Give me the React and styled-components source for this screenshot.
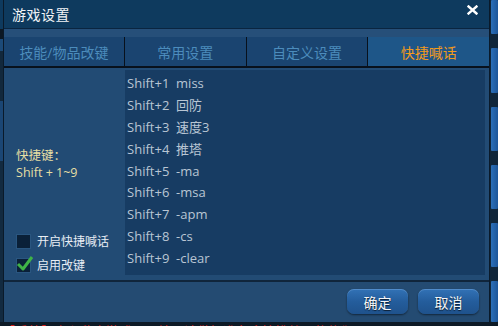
import React from "react";
import styled, { createGlobalStyle } from "styled-components";

const FONT = `"Open Sans", "Noto Sans CJK SC", sans-serif`;

const GlobalStyle = createGlobalStyle`
  html, body {
    margin: 0;
    padding: 0;
    background: #0d1d2c;
    overflow: hidden;
  }
  body {
    font-family: ${FONT};
  }
`;

//페이지
const Page = styled.div`
  width: 498px;
  height: 326px;
  display: flex;
  flex-direction: column;
  overflow: hidden;
`;

const Stage = styled.div`
  display: flex;
  height: 322px;
`;

const LeftEdge = styled.div`
  width: 4px;
  display: flex;
  flex-direction: column;
  background: #122a40;
`;

const EdgePiece = styled.div`
  height: ${props => props.h}px;
  background: ${props => props.color};
`;

const SideBars = styled.div`
  width: 9px;
  display: flex;
  flex-direction: column;
  gap: 14px;
  padding-left: 1px;
  background: #10263a;
`;

const SideBar = styled.div`
  height: ${props => props.h}px;
  background: linear-gradient(90deg, #2b6fb8, #1d5699);
  border-radius: 1px;
`;

const ChatLine = styled.div`
  height: 4px;
  overflow: hidden;
  background: #0d1a26;
  padding-left: 2px;
  color: #e0201a;
  font-size: 13px;
  line-height: 18px;
  white-space: nowrap;
`;

//다이얼로그
const Dialog = styled.div`
  width: 485px;
  display: flex;
  flex-direction: column;
  border-left: 1px solid #0a1a2a;
  border-right: 1px solid #0a1a2a;
  background: #224b74;
`;

const TitleBar = styled.div`
  height: 28px;
  display: flex;
  align-items: center;
  justify-content: space-between;
  padding: 0 10px 0 8px;
  background: #0e3a5e;
  border-bottom: 1px solid #0a2540;
`;

const Title = styled.div`
  color: #f2f4f6;
  font-size: 14px;
  letter-spacing: 0.5px;
`;

const CloseButton = styled.div`
  width: 14px;
  height: 14px;
  display: flex;
  align-items: center;
  justify-content: center;
  margin-top: -8px;
`;

const Strip = styled.div`
  height: 8px;
  background: #264f79;
`;

//탭
const Tabs = styled.div`
  height: 29px;
  display: flex;
  border-bottom: 2px solid #08111c;
`;

const Tab = styled.div`
  width: ${props => props.w}px;
  display: flex;
  align-items: center;
  justify-content: center;
  font-size: 14px;
  color: ${props => (props.active ? "#f39a1c" : "#4c8cbc")};
  background: ${props => (props.active ? "#1e5688" : "#1a4470")};
  border-left: ${props => (props.first ? "none" : "1px solid #08111c")};
`;

//본문
const Body = styled.div`
  height: 205px;
  display: flex;
  padding: 2px 4px 5px 0;
  border-bottom: 2px solid #10253b;
`;

const Side = styled.div`
  width: 121px;
  display: flex;
  flex-direction: column;
  padding-left: 12px;
  box-sizing: border-box;
`;

const HotkeyInfo = styled.div`
  margin-top: 77px;
  display: flex;
  flex-direction: column;
  color: #e6dfa4;
  font-size: 12.5px;
`;

const InfoLine = styled.div`
  height: 17px;
  line-height: 17px;
  white-space: nowrap;
`;

const Options = styled.div`
  margin-top: auto;
  display: flex;
  flex-direction: column;
  gap: 8px;
  padding-bottom: 2px;
`;

const Option = styled.label`
  display: flex;
  align-items: center;
  gap: 6px;
  color: #e8eef4;
  font-size: 12px;
  height: 16px;
`;

const Box = styled.span`
  width: 13px;
  height: 13px;
  position: relative;
  background: #0a2038;
  border: 1px solid #2a5680;
  flex-shrink: 0;
`;

const Check = styled.svg`
  position: absolute;
  left: -1px;
  top: -4px;
`;

const List = styled.div`
  flex: 1;
  background: #173c63;
  padding: 2px 0 0 2px;
`;

const Row = styled.div`
  display: flex;
  height: 21.9px;
  align-items: center;
  color: #b9c6d4;
  font-size: 13px;
`;

const Key = styled.span`
  width: 49px;
`;

//푸터
const Footer = styled.div`
  flex: 1;
  display: flex;
  justify-content: flex-end;
  align-items: flex-start;
  gap: 10px;
  padding: 7px 10px 0 0;
  background: #244b72;
`;

const Button = styled.div`
  width: 61px;
  height: 25px;
  display: flex;
  align-items: center;
  justify-content: center;
  border-radius: 7px;
  background: linear-gradient(180deg, #3272b6 0%, #245d9c 50%, #1f528c 100%);
  box-shadow: 0 1px 2px rgba(0, 0, 0, 0.5), inset 0 1px 0 rgba(140, 190, 240, 0.35);
  color: #f4f6f8;
  font-size: 14px;
  text-shadow: 0 1px 1px #0a1a2c;
`;

const hotkeys = [
  ["Shift+1", "miss"],
  ["Shift+2", "回防"],
  ["Shift+3", "速度3"],
  ["Shift+4", "推塔"],
  ["Shift+5", "-ma"],
  ["Shift+6", "-msa"],
  ["Shift+7", "-apm"],
  ["Shift+8", "-cs"],
  ["Shift+9", "-clear"]
];

const tabs = [
  { label: "技能/物品改键", w: 120 },
  { label: "常用设置", w: 121 },
  { label: "自定义设置", w: 121 },
  { label: "快捷喊话", w: 121, active: true }
];

const App = () => (
  <Page>
    <GlobalStyle />
    <Stage>
      {/* 왼쪽 가장자리 */}
      <LeftEdge>
        <EdgePiece h={29} color="#0e3a5e" />
        <EdgePiece h={10} color="#0c1824" />
        <EdgePiece h={12} color="#1c4a78" />
        <EdgePiece h={50} color="#12283c" />
        <EdgePiece h={60} color="#1b4674" />
      </LeftEdge>
      <Dialog>
        <TitleBar>
          <Title>游戏设置</Title>
          <CloseButton>
            <svg width="11" height="10" viewBox="0 0 11 10">
              <path d="M1.5 1.5 L9.5 8.5 M9.5 1.5 L1.5 8.5" stroke="#fff" strokeWidth="2.4" strokeLinecap="square" />
            </svg>
          </CloseButton>
        </TitleBar>
        <Strip />
        <Tabs>
          {tabs.map((t, i) => (
            <Tab key={t.label} w={t.w} active={t.active} first={i === 0}>
              {t.label}
            </Tab>
          ))}
        </Tabs>
        <Body>
          <Side>
            <HotkeyInfo>
              <InfoLine>快捷键：</InfoLine>
              <InfoLine>Shift + 1~9</InfoLine>
            </HotkeyInfo>
            <Options>
              <Option>
                <Box />
                开启快捷喊话
              </Option>
              <Option>
                <Box>
                  <Check width="18" height="17" viewBox="0 0 18 17">
                    <path d="M2 9 L7 14 L16 2" fill="none" stroke="#3fb247" strokeWidth="3" strokeLinejoin="round" />
                  </Check>
                </Box>
                启用改键
              </Option>
            </Options>
          </Side>
          <List>
            {hotkeys.map(([k, v]) => (
              <Row key={k}>
                <Key>{k}</Key>
                {v}
              </Row>
            ))}
          </List>
        </Body>
        <Footer>
          <Button>确定</Button>
          <Button>取消</Button>
        </Footer>
      </Dialog>
      {/* 오른쪽 배경 막대 */}
      <SideBars>
        <SideBar h={37} />
        <SideBar h={48} />
        <SideBar h={48} />
        <SideBar h={47} />
        <SideBar h={48} />
        <SideBar h={44} />
      </SideBars>
    </Stage>
    <ChatLine>【系统】小心敌人游戏已开始，请做好准备迎接挑战吧伙伴们</ChatLine>
  </Page>
);

export default App;
